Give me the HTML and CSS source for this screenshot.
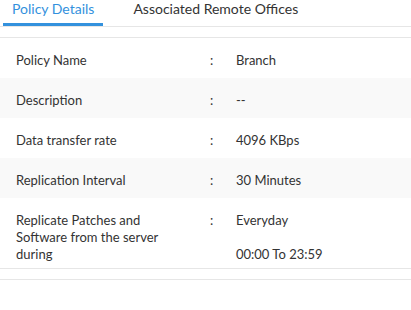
FILE: index.html
```html
<!DOCTYPE html>
<html>
<head>
<meta charset="utf-8">
<link rel="stylesheet" href="styles.css">
</head>
<body>
<div class="tabs">
  <div class="tab active">Policy Details</div>
  <div class="tab">Associated Remote Offices</div>
</div>
<div class="details">
  <div class="row">
    <div class="label">Policy Name</div>
    <div class="colon">:</div>
    <div class="value">Branch</div>
  </div>
  <div class="row alt">
    <div class="label">Description</div>
    <div class="colon">:</div>
    <div class="value">--</div>
  </div>
  <div class="row">
    <div class="label">Data transfer rate</div>
    <div class="colon">:</div>
    <div class="value">4096 KBps</div>
  </div>
  <div class="row alt">
    <div class="label">Replication Interval</div>
    <div class="colon">:</div>
    <div class="value">30 Minutes</div>
  </div>
  <div class="row last">
    <div class="label">Replicate Patches and Software from the server during</div>
    <div class="colon">:</div>
    <div class="value">
      <div>Everyday</div>
      <div class="time">00:00 To 23:59</div>
    </div>
  </div>
</div>
<div class="footer-line"></div>
</body>
</html>
```

FILE: styles.css
```css
html, body {
  margin: 0;
  padding: 0;
  background: #fff;
}
body {
  font-family: Lato, "Open Sans", sans-serif;
  color: #333;
  width: 411px;
}
.tabs {
  display: flex;
  padding-left: 3px;
  gap: 21px;
  border-bottom: 1px solid #e6e6e6;
}
.tab {
  font-size: 14px;
  line-height: 17px;
  padding: 0 9px 6px;
  border-bottom: 3px solid transparent;
  color: #333;
}
.tab.active {
  color: #3391dd;
  border-bottom-color: #3391dd;
}
.details {
  margin-top: 10px;
  border-top: 1px solid #e6e6e6;
  border-bottom: 1px solid #e6e6e6;
}
.row {
  display: flex;
  font-size: 13px;
  line-height: 17px;
  padding: 14px 0 9px 16px;
}
.row.alt {
  background: #f9f9f9;
}
.row.last {
  padding-bottom: 5px;
}
.label {
  width: 194px;
  padding-right: 32px;
  box-sizing: border-box;
}
.colon {
  width: 26px;
}
.value {
  flex: 1;
}
.time {
  margin-top: 17px;
}
.footer-line {
  margin-top: 10px;
  border-top: 1px solid #e6e6e6;
}
```
